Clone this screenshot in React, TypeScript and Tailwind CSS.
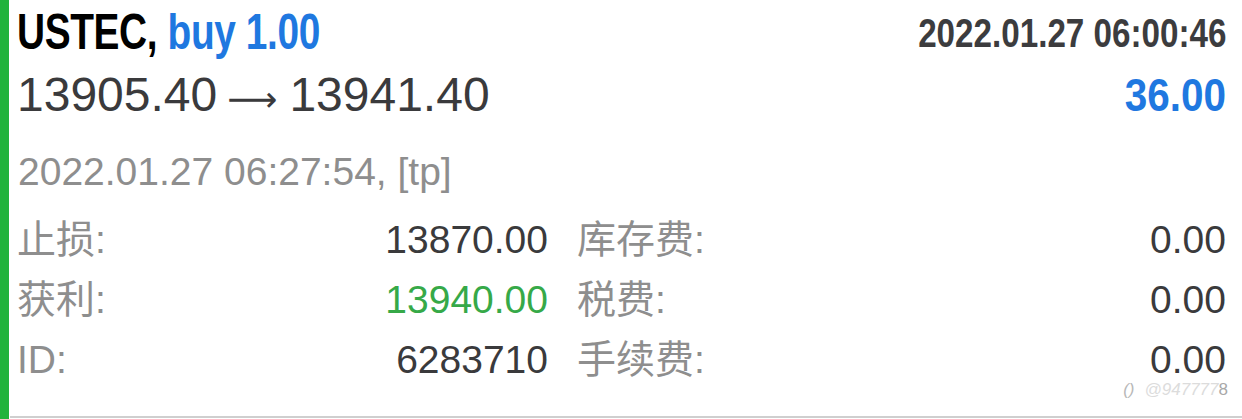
import React from "react";

const sans = { fontFamily: '"Liberation Sans", Arial, "Noto Sans CJK SC", sans-serif' };

function Row({ label, value, valueClass }: { label: string; value: string; valueClass?: string }) {
  return (
    <div className="flex h-[60px] items-center justify-between">
      <span className="text-[39px] leading-[60px] text-[#8e8e8e]">{label}</span>
      <span className={"text-[39px] leading-[60px] " + (valueClass ?? "text-[#3a3a3c]")}>{value}</span>
    </div>
  );
}

export default function App() {
  return (
    <div className="relative flex h-[419px] w-[1242px] overflow-hidden bg-white" style={sans}>
      <div className="h-full w-[9px] shrink-0 bg-[#21b33b]" />
      <div className="flex flex-1 flex-col pl-[8px] pr-[16px] pt-[5px]">
        <div className="flex h-[56px] items-start justify-between">
          <div className="h-[56px] w-[400px]">
            <span className="inline-block origin-left scale-x-[0.81] scale-y-[1.03] whitespace-nowrap text-[48px] font-bold leading-[56px] tracking-[-0.5px]">
              <span className="text-black">USTEC, </span>
              <span className="text-[#1f78e0]">buy 1.00</span>
            </span>
          </div>
          <span className="mt-[4px] inline-block origin-right scale-x-[0.83] whitespace-nowrap text-[40px] font-bold leading-[48px] text-[#3c3c3e]">
            2022.01.27 06:00:46
          </span>
        </div>
        <div className="mt-[6px] flex h-[56px] items-baseline justify-between">
          <span className="flex items-baseline whitespace-nowrap text-[48px] leading-[56px] text-[#3a3a3c]">
            <span>13905.40</span>
            <span className="ml-[10px] mr-[12px] text-[35px]" style={{ fontFamily: '"DejaVu Sans", sans-serif' }}>⟶</span>
            <span>13941.40</span>
          </span>
          <span className="inline-block origin-right scale-x-[0.88] text-[46px] font-bold leading-[56px] text-[#1f78e0]">36.00</span>
        </div>
        <div className="mt-[26px] h-[46px] whitespace-nowrap pl-[1px] text-[39px] leading-[46px] text-[#8e8e8e]">
          2022.01.27 06:27:54, [tp]
        </div>
        <div className="mt-[15px] grid grid-cols-[531px_1fr] gap-x-[29px]">
          <Row label="止损:" value="13870.00" />
          <Row label="库存费:" value="0.00" />
          <Row label="获利:" value="13940.00" valueClass="text-[#36a948]" />
          <Row label="税费:" value="0.00" />
          <Row label="ID:" value="6283710" />
          <Row label="手续费:" value="0.00" />
        </div>
      </div>
      <div className="absolute bottom-[19px] right-[14px] whitespace-nowrap text-[17px] italic leading-[20px] text-[#dcdcdc]">
        <span className="mr-[10px] text-[#b8b8b8]">()</span>@947777<span className="not-italic text-[#a8a8a8]">8</span>
      </div>
      <div className="absolute bottom-[1px] left-[10px] right-0 h-[2px] bg-[#cfcfcf]" />
    </div>
  );
}
